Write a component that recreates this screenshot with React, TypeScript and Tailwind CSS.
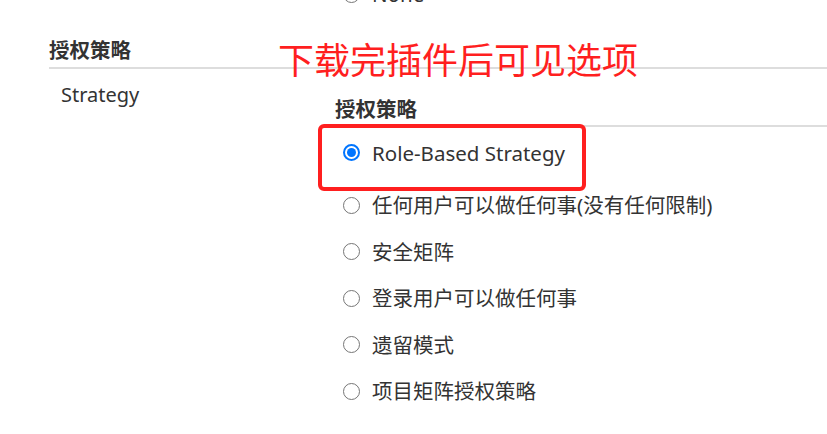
const options = [
  { label: 'Role-Based Strategy', checked: true },
  { label: '任何用户可以做任何事(没有任何限制)', checked: false },
  { label: '安全矩阵', checked: false },
  { label: '登录用户可以做任何事', checked: false },
  { label: '遗留模式', checked: false },
  { label: '项目矩阵授权策略', checked: false },
];

function Radio({ checked }: { checked: boolean }) {
  if (checked) {
    return (
      <span className="flex h-[17px] w-[17px] shrink-0 items-center justify-center rounded-full border-2 border-[#0075ff] bg-white">
        <span className="h-[9px] w-[9px] rounded-full bg-[#0075ff]" />
      </span>
    );
  }
  return <span className="h-[17px] w-[17px] shrink-0 rounded-full border border-[#767676] bg-white" />;
}

function OptionRow({ label, checked, className = '' }: { label: string; checked: boolean; className?: string }) {
  return (
    <label className={`flex h-[46.5px] items-center gap-[12px] pl-[8px] ${className}`}>
      <Radio checked={checked} />
      <span className="text-[20.5px] leading-[28px] text-[#333]">{label}</span>
    </label>
  );
}

export default function App() {
  return (
    <div
      className="relative h-[434px] w-[827px] overflow-hidden bg-white"
      style={{ fontFamily: '"Noto Sans", "Noto Sans CJK SC", sans-serif' }}
    >
      {/* 上一组的最后一个选项 */}
      <div className="mt-[-18px] flex h-[24px] items-center gap-[12px] pl-[343px]">
        <Radio checked={false} />
        <span className="text-[20.5px] leading-[24px] text-[#333]">None</span>
      </div>

      <h2 className="ml-[49px] mt-[30px] border-b-2 border-[#dddddd] pb-[3px] text-[20.5px] font-bold leading-[28px] text-[#333]">
        授权策略
      </h2>

      <div className="ml-[49px] flex">
        <div className="w-[286px] shrink-0 pl-[12px] pt-[12px] text-[20px] leading-[28px] text-[#333]">Strategy</div>
        <div className="flex-1">
          <h3 className="mt-[26px] border-b-2 border-[#dddddd] pb-[2px] text-[20.5px] font-bold leading-[28px] text-[#333]">
            授权策略
          </h3>
          <div className="pt-[2.5px]">
            {options.map((o, i) => (
              <OptionRow key={o.label} label={o.label} checked={o.checked} className={i === 1 ? 'mt-[6px]' : ''} />
            ))}
          </div>
        </div>
      </div>

      {/* 标注 */}
      <div className="absolute left-[278px] top-[43px] text-[36px] leading-[36px] text-[#ff1f1f]">下载完插件后可见选项</div>
      <div className="absolute left-[318px] top-[124px] h-[67px] w-[268px] rounded-[6px] border-4 border-[#ff1f1f]" />
    </div>
  );
}
